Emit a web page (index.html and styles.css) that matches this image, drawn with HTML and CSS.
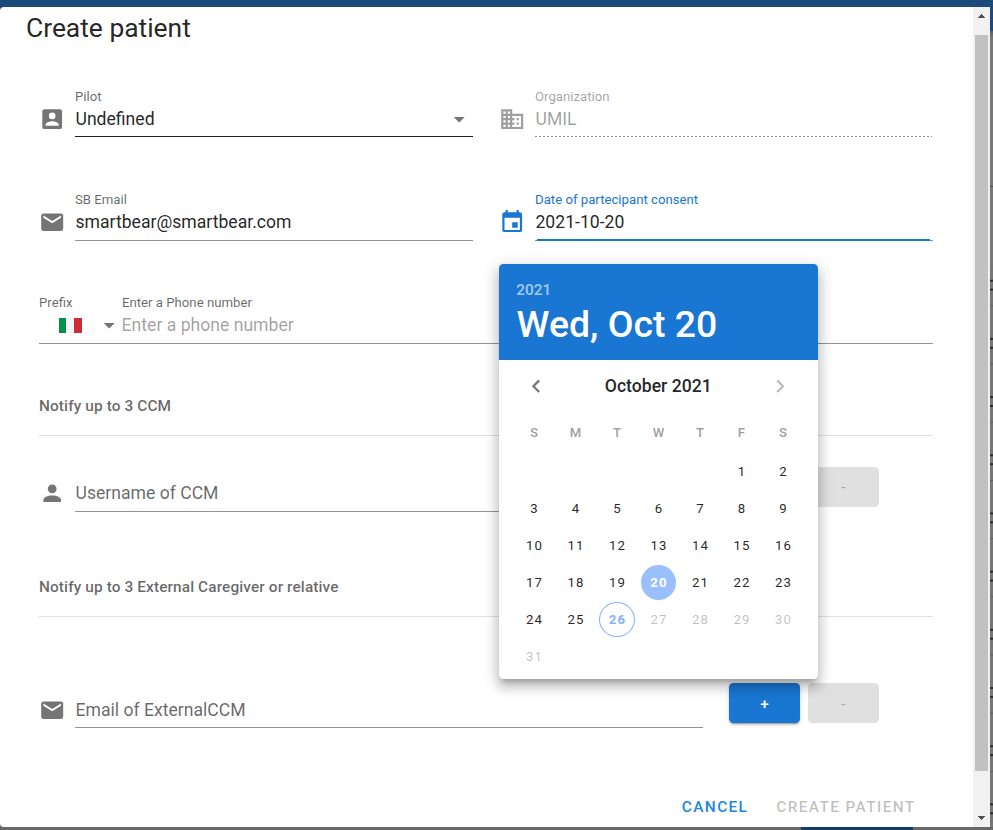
FILE: index.html
```html
<!DOCTYPE html>
<html lang="en">
<head>
<meta charset="utf-8">
<title>Create patient</title>
<link rel="stylesheet" href="styles.css">
</head>
<body>
<div class="app">
  <div class="app-bar"></div>
  <div class="app-head"></div>
  <div class="app-table"></div>
  <div class="app-foot"><div class="app-btn"></div></div>
</div>

<div class="dialog">
  <main class="card">
    <h1 class="title">Create patient</h1>

    <div class="row row-1">
      <div class="field">
        <svg class="icon" viewBox="0 0 24 24"><path d="M6,17C6,15 10,13.9 12,13.9C14,13.9 18,15 18,17V18H6M15,9A3,3 0 0,1 12,12A3,3 0 0,1 9,9A3,3 0 0,1 12,6A3,3 0 0,1 15,9M3,5V19A2,2 0 0,0 5,21H19A2,2 0 0,0 21,19V5A2,2 0 0,0 19,3H5C3.89,3 3,3.9 3,5Z"/></svg>
        <div class="slot strong">
          <label class="label">Pilot</label>
          <div class="value with-arrow"><span>Undefined</span><svg class="icon" viewBox="0 0 24 24"><path d="M7,10L12,15L17,10H7Z"/></svg></div>
        </div>
      </div>
      <div class="field disabled">
        <svg class="icon" viewBox="0 0 24 24"><path d="M18,15H16V17H18M18,11H16V13H18M20,19H12V17H14V15H12V13H14V11H12V9H20M10,7H8V5H10M10,11H8V9H10M10,15H8V13H10M10,19H8V17H10M6,7H4V5H6M6,11H4V9H6M6,15H4V13H6M6,19H4V17H6M12,7V3H2V21H22V7H12Z"/></svg>
        <div class="slot">
          <label class="label">Organization</label>
          <div class="value">UMIL</div>
        </div>
      </div>
    </div>

    <div class="row row-2">
      <div class="field">
        <svg class="icon" viewBox="0 0 24 24"><path d="M20,8L12,13L4,8V6L12,11L20,6M20,4H4C2.89,4 2,4.89 2,6V18A2,2 0 0,0 4,20H20A2,2 0 0,0 22,18V6C22,4.89 21.1,4 20,4Z"/></svg>
        <div class="slot">
          <label class="label">SB Email</label>
          <div class="value">smartbear@smartbear.com</div>
        </div>
      </div>
      <div class="field active">
        <svg class="icon" viewBox="0 0 24 24"><path d="M19,19H5V8H19M16,1V3H8V1H6V3H5C3.89,3 3,3.89 3,5V19A2,2 0 0,0 5,21H19A2,2 0 0,0 21,19V5C21,3.89 20.1,3 19,3H18V1M17,12H12V17H17V12Z"/></svg>
        <div class="slot">
          <label class="label">Date of partecipant consent</label>
          <div class="value">2021-10-20</div>
        </div>
      </div>
    </div>

    <div class="row row-3">
      <div class="slot phone">
        <div class="prefix">
          <label class="label">Prefix</label>
          <div class="value with-arrow"><span class="flag"><i></i><i></i><i></i></span><svg class="icon" viewBox="0 0 24 24"><path d="M7,10L12,15L17,10H7Z"/></svg></div>
        </div>
        <div class="number">
          <label class="label">Enter a Phone number</label>
          <div class="value placeholder">Enter a phone number</div>
        </div>
      </div>
    </div>

    <h2 class="section section-1">Notify up to 3 CCM</h2>
    <div class="entry entry-1">
      <svg class="icon" viewBox="0 0 24 24"><path d="M12,4A4,4 0 0,1 16,8A4,4 0 0,1 12,12A4,4 0 0,1 8,8A4,4 0 0,1 12,4M12,14C16.42,14 20,15.79 20,18V20H4V18C4,15.79 7.58,14 12,14Z"/></svg>
      <div class="entry-input">Username of CCM</div>
      <button class="btn btn-add">+</button>
      <button class="btn btn-remove">-</button>
    </div>

    <h2 class="section section-2">Notify up to 3 External Caregiver or relative</h2>
    <div class="entry entry-2">
      <svg class="icon" viewBox="0 0 24 24"><path d="M20,8L12,13L4,8V6L12,11L20,6M20,4H4C2.89,4 2,4.89 2,6V18A2,2 0 0,0 4,20H20A2,2 0 0,0 22,18V6C22,4.89 21.1,4 20,4Z"/></svg>
      <div class="entry-input">Email of ExternalCCM</div>
      <button class="btn btn-add">+</button>
      <button class="btn btn-remove">-</button>
    </div>

    <footer class="actions">
      <span class="cancel">CANCEL</span>
      <span class="create">CREATE PATIENT</span>
    </footer>
  </main>
  <div class="scrollbar">
    <svg class="arrow" viewBox="0 0 7 4" shape-rendering="crispEdges"><path d="M3 0h1v1h1v1h1v1h1v1H0V3h1V2h1V1h1z"/></svg>
    <div class="thumb"></div>
    <svg class="arrow" viewBox="0 0 7 4" shape-rendering="crispEdges"><path d="M3 4h1V3h1V2h1V1h1V0H0v1h1v1h1v1h1z"/></svg>
  </div>
</div>

<div class="picker">
  <div class="picker-head">
    <div class="year">2021</div>
    <div class="date">Wed, Oct 20</div>
  </div>
  <div class="month">
    <svg class="chev" viewBox="0 0 24 24"><path d="M15.41,16.58L10.83,12L15.41,7.41L14,6L8,12L14,18L15.41,16.58Z"/></svg>
    <span>October 2021</span>
    <svg class="chev off" viewBox="0 0 24 24"><path d="M8.59,16.58L13.17,12L8.59,7.41L10,6L16,12L10,18L8.59,16.58Z"/></svg>
  </div>
  <div class="week"><b>S</b><b>M</b><b>T</b><b>W</b><b>T</b><b>F</b><b>S</b></div>
  <div class="days">
    <span class="first">1</span><span>2</span>
    <span>3</span><span>4</span><span>5</span><span>6</span><span>7</span><span>8</span><span>9</span>
    <span>10</span><span>11</span><span>12</span><span>13</span><span>14</span><span>15</span><span>16</span>
    <span>17</span><span>18</span><span>19</span><span class="selected">20</span><span>21</span><span>22</span><span>23</span>
    <span>24</span><span>25</span><span class="today">26</span><span class="out">27</span><span class="out">28</span><span class="out">29</span><span class="out">30</span>
    <span class="out">31</span>
  </div>
</div>
</body>
</html>
```

FILE: styles.css
```css
* { box-sizing: border-box; }
body {
  margin: 0;
  position: relative;
  height: 830px;
  overflow: hidden;
  font-family: Roboto, "Liberation Sans", sans-serif;
  color: rgba(0, 0, 0, .87);
}
h1, h2 { margin: 0; }

/* Page behind the dialog */
.app { height: 830px; display: flex; flex-direction: column; background: #6c6c6c; }
.app-bar { height: 31px; background: #1b4a7b; }
.app-head { height: 229px; background: linear-gradient(#4c4c4c, #4c4c4c) 0 155px / 100% 1px no-repeat, linear-gradient(#606060, #787878 8px); }
.app-table {
  flex: 1;
  background: linear-gradient(transparent 20px, #2c2c2c 20px 22px, transparent 22px 29px, #2c2c2c 29px 31px, transparent 31px 45px, #5c5c5c 45px 46px, transparent 46px) 0 0 / 100% 58.2px repeat-y, #777;
}
.app-foot { height: 3px; background: #696969; padding-left: 801px; }
.app-btn { width: 112px; height: 3px; background: #143c69; }

.dialog {
  position: absolute;
  left: 0;
  top: 7px;
  width: 990px;
  height: 820px;
  display: flex;
  background: #fff;
  border-radius: 4px 0 0 4px;
}
.card { flex: 1; display: flex; flex-direction: column; padding: 0 40px 0 39px; }

.title { height: 80px; margin-left: -13px; padding-top: 4px; font-size: 26.4px; line-height: 35px; font-weight: 400; }

.icon { width: 26.4px; height: 26.4px; flex: none; fill: rgba(0, 0, 0, .54); }
.row { display: grid; grid-template-columns: 434px 433px; column-gap: 26px; }
.row-1 { height: 50px; margin-bottom: 53px; }
.row-2 { height: 51px; margin-bottom: 52px; }
.row-3 { height: 51px; grid-template-columns: 894px; }
.field { display: flex; gap: 9.6px; }
.field > .icon { margin-top: 19px; }
.slot { flex: 1; position: relative; border-bottom: 1px solid rgba(0, 0, 0, .42); }
.strong { border-bottom-color: rgba(0, 0, 0, .87); }
.label { display: block; height: 20px; font-size: 13.2px; line-height: 20px; color: rgba(0, 0, 0, .6); white-space: nowrap; }
.value { padding-left: .5px; font-size: 17.6px; line-height: 24px; height: 24px; white-space: nowrap; }
.with-arrow { display: flex; justify-content: space-between; align-items: center; padding-right: .5px; }
.placeholder { padding-left: 0; margin-left: -.4px; color: rgba(0, 0, 0, .38); }

.disabled .label, .disabled .value { color: rgba(0, 0, 0, .38); }
.disabled .icon { fill: rgba(0, 0, 0, .38); }
.disabled .slot { border-bottom: 0; background: repeating-linear-gradient(90deg, rgba(0, 0, 0, .42) 0 2px, transparent 2px 4px) left bottom / 100% 1px no-repeat; }

.active .label { color: #1976d2; }
.active .icon { fill: #1976d2; }
.active .slot { margin-right: -1px; }
.active .slot::after { content: ""; position: absolute; left: 2px; right: 3px; bottom: -1px; height: 2px; background: #1976d2; }

.phone { display: flex; }
.prefix { width: 83px; }
.prefix .with-arrow { padding: 0 0 0 19.6px; }
.flag { display: flex; width: 23px; height: 15px; }
.flag i { flex: 1; background: #f4f4f4; }
.flag i:first-child { background: #009246; }
.flag i:last-child { background: #ce2b37; }

.section { width: 894px; border-bottom: 1px solid rgba(0, 0, 0, .12); font-size: 15.4px; line-height: 20px; font-weight: 500; letter-spacing: .11px; color: rgba(0, 0, 0, .6); }
.section-1 { height: 92px; padding-top: 52px; }
.section-2 { height: 105px; padding-top: 65px; }

.entry { display: flex; align-items: flex-start; }
.entry-1 { height: 76px; padding-top: 31px; }
.entry-2 { height: 111px; padding-top: 66px; }
.entry .icon { margin-top: 13px; }
.entry-input { width: 628px; height: 45px; margin: 0 26px 0 9.6px; padding: 14px 0 0 .5px; border-bottom: 1px solid rgba(0, 0, 0, .42); font-size: 17.6px; line-height: 24px; color: rgba(0, 0, 0, .6); }
.entry-2 .icon { margin-top: 14px; }
.entry-2 .entry-input { padding-top: 15px; }
.btn { width: 71px; height: 40px; padding: 0; border: 0; border-radius: 4.4px; font: 500 15.4px/40px Roboto, sans-serif; }
.btn-add { margin-right: 8px; color: #fff; background: #1976d2; box-shadow: 0 3px 1px -2px rgba(0, 0, 0, .2), 0 2px 2px rgba(0, 0, 0, .14), 0 1px 5px rgba(0, 0, 0, .12); }
.btn-remove { color: rgba(0, 0, 0, .26); background: #e0e0e0; }
.entry-2 .btn { padding-top: 1px; }

.actions { display: flex; justify-content: flex-end; gap: 28px; margin-top: 68px; padding-right: 17.4px; font-size: 15.4px; line-height: 22px; font-weight: 500; letter-spacing: 1.375px; }
.cancel { color: #2186e2; }
.create { color: rgba(0, 0, 0, .26); }

.scrollbar { width: 17px; display: flex; flex-direction: column; align-items: center; background: #f1f1f1; }
.arrow { width: 7px; height: 4px; margin: 7px 0 17px; fill: #505050; }
.thumb { width: 13px; height: 736px; background: #c1c1c1; }
.thumb + .arrow { margin: 45px 0 0; }

.picker {
  position: absolute;
  left: 499px;
  top: 264px;
  width: 319px;
  height: 415px;
  background: #fff;
  border-radius: 4.4px;
  overflow: hidden;
  box-shadow: 0 5.5px 5.5px -3.3px rgba(0, 0, 0, .2), 0 8.8px 11px 1.1px rgba(0, 0, 0, .14), 0 3.3px 15.4px 2.2px rgba(0, 0, 0, .12);
}
.picker-head { height: 96px; padding: 17px 17.6px 0; background: #1976d2; color: #fff; }
.year { font-size: 15.4px; line-height: 18px; font-weight: 500; opacity: .6; margin-left: -.4px; }
.date { margin-top: 6px; font-size: 37.4px; line-height: 38px; font-weight: 500; }
.month { display: flex; align-items: center; justify-content: space-between; height: 53px; padding: 0 24.5px 0 24px; font-size: 17.6px; font-weight: 500; }
.month span { margin-top: -2px; }
.chev { width: 26.4px; height: 26.4px; fill: rgba(0, 0, 0, .54); }
.chev.off { fill: rgba(0, 0, 0, .26); }
.week, .days { display: grid; grid-template-columns: repeat(7, 41.5px); padding-left: 14.25px; text-align: center; font-size: 13.2px; }
.week { height: 40px; line-height: 40px; color: rgba(0, 0, 0, .38); }
.week b { font-weight: 600; }
.days { grid-auto-rows: 37px; align-items: center; justify-items: center; letter-spacing: 1.18px; }
.days span { width: 35px; height: 35px; padding-left: 1px; line-height: 35px; border-radius: 50%; }
.days .first { grid-column: 6; }
.days .selected { background: #99bfff; color: #fff; font-weight: 700; }
.days .today { width: 36px; border: 1px solid #82b1ff; line-height: 33px; color: #82b1ff; font-weight: 700; }
.days .out { color: rgba(0, 0, 0, .26); }
```
